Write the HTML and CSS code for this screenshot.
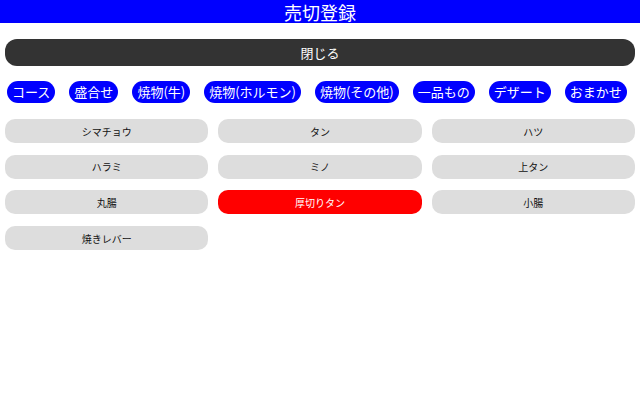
FILE: index.html
```html
<!DOCTYPE html>
<html lang="ja">
<head>
<meta charset="utf-8">
<title>売切登録</title>
<link rel="stylesheet" href="styles.css">
</head>
<body>
<header class="header"><h1 class="title">売切登録</h1></header>
<main class="main">
  <button class="close-btn">閉じる</button>
  <nav class="cats">
    <span class="cat">コース</span>
    <span class="cat">盛合せ</span>
    <span class="cat">焼物(牛)</span>
    <span class="cat">焼物(ホルモン)</span>
    <span class="cat">焼物(その他)</span>
    <span class="cat">一品もの</span>
    <span class="cat">デザート</span>
    <span class="cat">おまかせ</span>
  </nav>
  <div class="items">
    <button class="item">シマチョウ</button>
    <button class="item">タン</button>
    <button class="item">ハツ</button>
    <button class="item">ハラミ</button>
    <button class="item">ミノ</button>
    <button class="item">上タン</button>
    <button class="item">丸腸</button>
    <button class="item item-sold">厚切りタン</button>
    <button class="item">小腸</button>
    <button class="item">焼きレバー</button>
  </div>
</main>
</body>
</html>
```
FILE: styles.css
```css
* { box-sizing: border-box; }
html, body {
  margin: 0;
  padding: 0;
  background: #fff;
  font-family: "Noto Sans CJK JP", "Noto Sans", sans-serif;
}
.header {
  height: 23px;
  background: #0000ff;
  color: #fff;
  text-align: center;
  display: flex;
  align-items: center;
  justify-content: center;
}
.title {
  margin: 0;
  font-size: 18px;
  font-weight: normal;
  line-height: 20px;
}
.main {
  padding: 16px 5px 0 5px;
  display: flex;
  flex-direction: column;
}
.close-btn {
  height: 27px;
  border: none;
  border-radius: 12px;
  background: #333;
  color: #fff;
  font-family: inherit;
  font-size: 13px;
  padding: 0;
}
.cats {
  display: flex;
  gap: 14px;
  padding-left: 2px;
  margin-top: 15px;
}
.cat {
  height: 22px;
  line-height: 22px;
  padding: 0 5px;
  border-radius: 11px;
  background: #0000ff;
  color: #fff;
  font-size: 13px;
  white-space: nowrap;
}
.items {
  display: grid;
  grid-template-columns: repeat(3, 1fr);
  column-gap: 10px;
  row-gap: 11.7px;
  margin-top: 16px;
}
.item {
  height: 24px;
  border: none;
  border-radius: 10px;
  background: #dddddd;
  color: #111;
  font-family: inherit;
  font-size: 10px;
  padding: 0;
}
.item-sold {
  background: #ff0000;
  color: #fff;
}
```
